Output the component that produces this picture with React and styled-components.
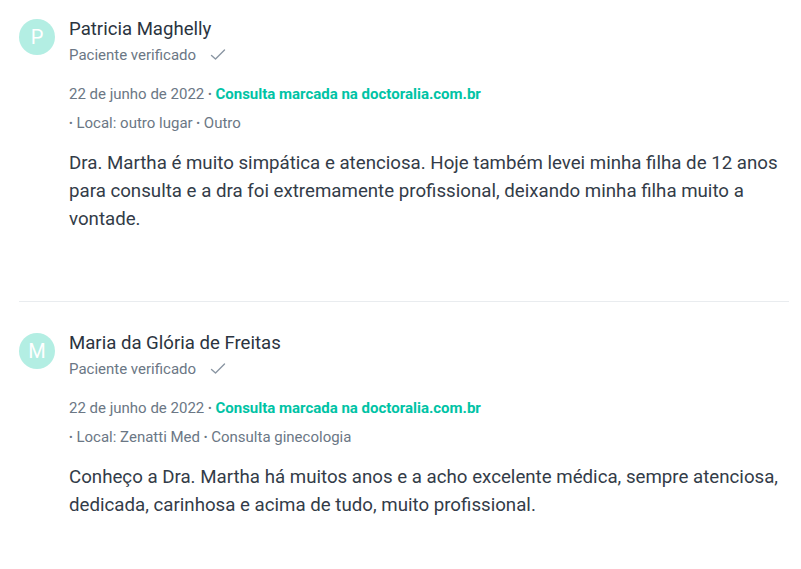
import React from "react";
import styled, { createGlobalStyle } from "styled-components";

const GlobalStyle = createGlobalStyle`
  body {
    margin: 0;
    background: #fff;
    font-family: Roboto, "Liberation Sans", sans-serif;
  }
`;

const reviews = [
  {
    initial: "P",
    name: "Patricia Maghelly",
    date: "22 de junho de 2022",
    place: "Local: outro lugar",
    service: "Outro",
    text:
      "Dra. Martha é muito simpática e atenciosa. Hoje também levei minha filha de 12 anos para consulta e a dra foi extremamente profissional, deixando minha filha muito a vontade.",
  },
  {
    initial: "M",
    name: "Maria da Glória de Freitas",
    date: "22 de junho de 2022",
    place: "Local: Zenatti Med",
    service: "Consulta ginecologia",
    text:
      "Conheço a Dra. Martha há muitos anos e a acho excelente médica, sempre atenciosa, dedicada, carinhosa e acima de tudo, muito profissional.",
  },
];

export default function App() {
  return (
    <>
      <GlobalStyle />
      <List>
        {reviews.map((r) => (
          <Review key={r.name}>
            <Avatar>{r.initial}</Avatar>
            <Content>
              <Name>{r.name}</Name>
              <Verified>
                Paciente verificado
                <svg width="16" height="12" viewBox="0 0 16 12" fill="none">
                  <path
                    d="M1.5 6.5 L5.5 10 L14.5 1"
                    stroke="#8a96a3"
                    strokeWidth="1.4"
                    strokeLinecap="round"
                    strokeLinejoin="round"
                  />
                </svg>
              </Verified>
              <Meta>
                {r.date} <Dot>•</Dot> <Booked>Consulta marcada na doctoralia.com.br</Booked>
              </Meta>
              <Meta $small>
                <Dot>•</Dot> {r.place} <Dot>•</Dot> {r.service}
              </Meta>
              <Body>{r.text}</Body>
            </Content>
          </Review>
        ))}
      </List>
    </>
  );
}

const List = styled.div`
  width: 770px;
  padding-left: 19px;
`;

const Review = styled.div`
  display: flex;
  gap: 14px;
  padding: 17px 0 68px;

  & + & {
    border-top: 1px solid #e9ecef;
    padding-top: 29px;
  }
`;

const Avatar = styled.div`
  flex: none;
  width: 36px;
  height: 36px;
  margin-top: 2px;
  border-radius: 50%;
  background: #b3eee3;
  color: #fff;
  font-size: 20px;
  display: flex;
  align-items: center;
  justify-content: center;
`;

const Content = styled.div`
  flex: 1;
  display: flex;
  flex-direction: column;
`;

const Name = styled.div`
  font-size: 18.6px;
  line-height: 24px;
  color: #2b3440;
`;

const Verified = styled.div`
  display: flex;
  align-items: center;
  gap: 14px;
  margin-top: 4px;
  font-size: 15px;
  line-height: 20px;
  color: #6b7785;
`;

const Meta = styled.div`
  font-size: 15px;
  line-height: 20px;
  color: #6b7785;
  margin-top: ${(p) => (p.$small ? "8px" : "19px")};
`;

const Dot = styled.span`
  font-size: 11px;
  vertical-align: 1px;
`;

const Booked = styled.span`
  color: #00c3a5;
  font-weight: 700;
`;

const Body = styled.p`
  margin: 15px 0 0;
  font-size: 18.7px;
  line-height: 28px;
  color: #333c48;
`;
